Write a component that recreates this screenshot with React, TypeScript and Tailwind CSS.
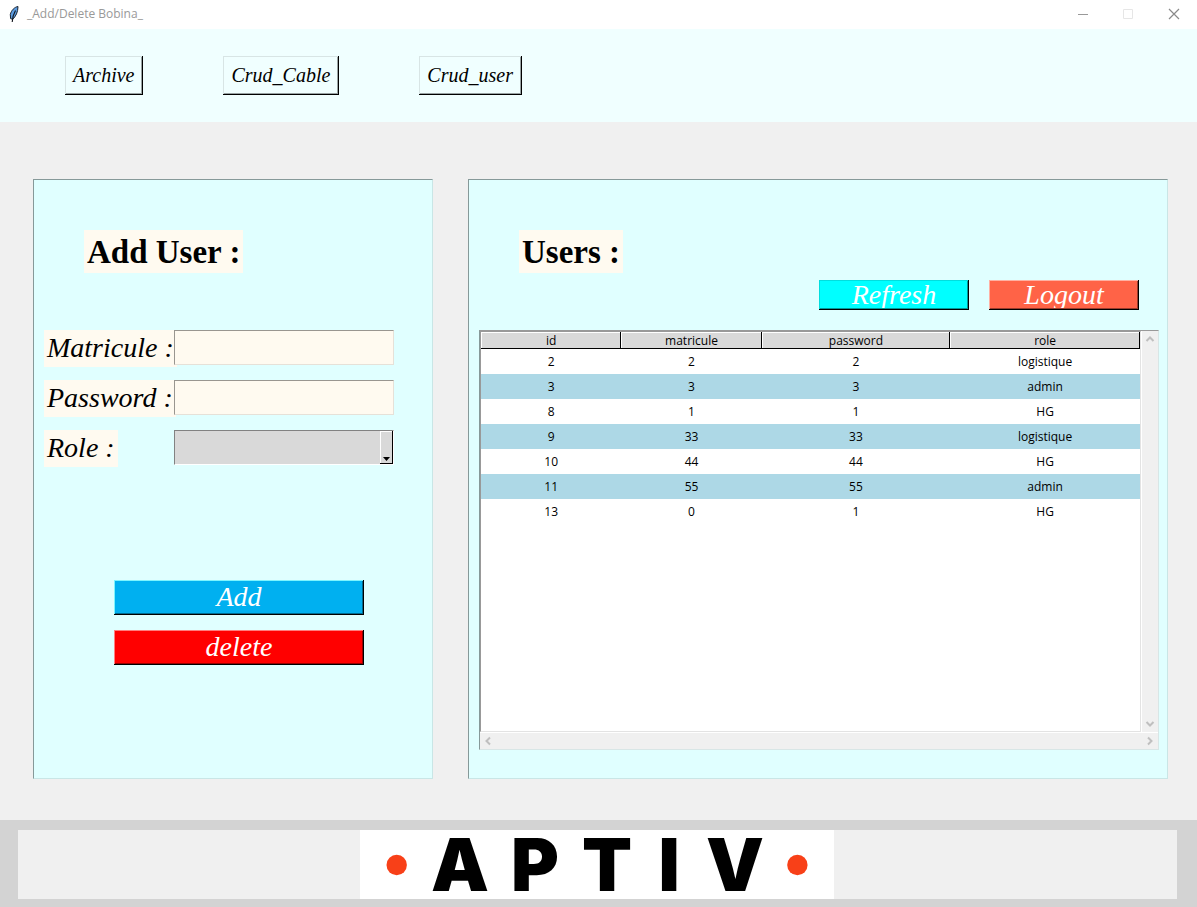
import React from "react";

type User = { id: number; matricule: string; password: string; role: string };

const users: User[] = [
  { id: 2, matricule: "2", password: "2", role: "logistique" },
  { id: 3, matricule: "3", password: "3", role: "admin" },
  { id: 8, matricule: "1", password: "1", role: "HG" },
  { id: 9, matricule: "33", password: "33", role: "logistique" },
  { id: 10, matricule: "44", password: "44", role: "HG" },
  { id: 11, matricule: "55", password: "55", role: "admin" },
  { id: 13, matricule: "0", password: "1", role: "HG" },
];

const sans = "font-['Open_Sans','Noto_Sans',sans-serif]";
const serif = "font-['Liberation_Serif',serif]";

function TitleBar() {
  return (
    <header className={`flex h-[29px] items-center bg-white pb-0.5 text-[#999999] ${sans}`}>
      <svg className="ml-2 h-[18px] w-3" viewBox="0 0 12 18" aria-hidden="true">
        <path d="M10 1.500C6.500 2 3.200 5.500 2.300 9.500L2.600 13.600L4.600 14.300C7.800 11.500 10 7 10 1.500Z" fill="#5b9be0" stroke="#1b2430" strokeWidth="1" />
        <path d="M7.500 5.500C6 8 4.700 11 4.200 17" fill="none" stroke="#10151c" strokeWidth="1.100" />
      </svg>
      <h1 className="ml-[7px] flex-1 text-xs">_Add/Delete Bobina_</h1>
      <button type="button" aria-label="Minimize" className="flex h-full w-[45px] items-center justify-center">
        <svg className="h-3 w-3" viewBox="0 0 12 12"><path d="M0 6.500H10" stroke="#999" /></svg>
      </button>
      <button type="button" aria-label="Maximize" disabled className="flex h-full w-[45px] items-center justify-center">
        <svg className="h-3 w-3" viewBox="0 0 12 12"><path d="M0.500 1.500H9.500V10.500H0.500Z" fill="none" stroke="#e6e6e6" /></svg>
      </button>
      <button type="button" aria-label="Close" className="flex h-full w-[46px] items-center justify-center">
        <svg className="h-3 w-3" viewBox="0 0 12 12"><path d="M1 1L11 11M11 1L1 11" stroke="#8a8a8a" strokeWidth="1.200" /></svg>
      </button>
    </header>
  );
}

function NavButton({ children }: { children: React.ReactNode }) {
  return (
    <button
      type="button"
      className="h-[39px] pr-[9px] pb-0.5 pl-2 text-xl italic shadow-[inset_-1px_-1px_0_#000,inset_1px_1px_0_#d8e5e5,inset_-2px_-2px_0_#98a2a2]"
    >
      {children}
    </button>
  );
}

function ActionButton({ className, textClass, children }: { className: string; textClass: string; children: React.ReactNode }) {
  return (
    <button type="button" className={`block p-0.5 text-[28px] text-white italic ${className}`}>
      <span className={`block overflow-hidden ${textClass}`}>{children}</span>
    </button>
  );
}

function PanelTitle({ children }: { children: React.ReactNode }) {
  return (
    <h2 className="mt-[50px] ml-[50px] w-max bg-[#fffaf0] px-[3px] pt-0.5 text-[33px] leading-[41px] font-bold">{children}</h2>
  );
}

function FieldRow({ id, label, children }: { id: string; label: string; children: React.ReactNode }) {
  return (
    <div className="flex h-[37px] items-start">
      <div className="w-[130px] shrink-0">
        <label htmlFor={id} className="block w-max bg-[#fffaf0] px-[3px] pb-0.5 text-[28px] leading-[35px] italic">
          {label}
        </label>
      </div>
      {children}
    </div>
  );
}

const inputClass =
  "relative h-[35px] w-[220px] border border-t-[#999690] border-l-[#999690] border-r-[#e6e1d8] border-b-[#e6e1d8] bg-[#fffaf0] px-1 text-xl outline-none";

function AddUserPanel() {
  return (
    <section className="w-[400px] shrink-0 border border-t-[#869999] border-l-[#869999] border-r-[#c9e6e6] border-b-[#c9e6e6] bg-[#e0ffff]">
      <PanelTitle>Add User :</PanelTitle>
      <form className="mt-[57px] ml-2.5" onSubmit={(e) => e.preventDefault()}>
        <div className="flex flex-col gap-[13px]">
          <FieldRow id="matricule" label="Matricule :">
            <input id="matricule" className={inputClass} />
          </FieldRow>
          <FieldRow id="password" label="Password :">
            <input id="password" className={inputClass} />
          </FieldRow>
          <FieldRow id="role" label="Role :">
            <div className="relative h-[35px] w-[220px]">
              <select
                id="role"
                defaultValue=""
                className="h-full w-full appearance-none border border-t-[#828282] border-l-[#828282] border-r-white border-b-white bg-[#d9d9d9] pr-4 pl-1 text-xl outline-none"
              >
                <option value=""></option>
                <option>admin</option>
                <option>logistique</option>
                <option>HG</option>
              </select>
              <span className="pointer-events-none absolute top-px right-px bottom-px flex w-[13px] items-end justify-center bg-[#d9d9d9] pb-[3px] shadow-[inset_-1px_-1px_0_#000,inset_1px_1px_0_#fff]">
                <svg className="h-1 w-[7px]" viewBox="0 0 7 4"><path d="M0 0H7L3.500 4Z" /></svg>
              </span>
            </div>
          </FieldRow>
        </div>
        <div className="mt-[113px] ml-[70px] flex flex-col gap-[15px]">
          <ActionButton
            className="w-[250px] bg-[#00b0f0] shadow-[inset_-1px_-1px_0_#000,inset_1px_1px_0_#7df4ff,inset_-2px_-2px_0_#006a90]"
            textClass="h-[31px] leading-[29px]"
          >
            Add
          </ActionButton>
          <ActionButton
            className="w-[250px] bg-[#ff0000] shadow-[inset_-1px_-1px_0_#000,inset_1px_1px_0_#ff7f7f,inset_-2px_-2px_0_#990000]"
            textClass="h-[31px] leading-[29px]"
          >
            delete
          </ActionButton>
        </div>
      </form>
    </section>
  );
}

function Arrow({ d, label }: { d: string; label: string }) {
  return (
    <button type="button" aria-label={label} className="flex h-4 w-4 items-center justify-center">
      <svg className="h-2.5 w-2.5" viewBox="0 0 10 10"><path d={d} fill="none" stroke="#bfbfbf" strokeWidth="2" /></svg>
    </button>
  );
}

const headCell =
  "bg-[#d9d9d9] p-0 font-normal leading-[17px] shadow-[inset_-1px_-1px_0_#000,inset_1px_1px_0_#fff]";

function UsersTable() {
  return (
    <div className="mt-5 mr-2 ml-2.5 border border-t-[#999999] border-l-[#869999] border-r-[#d8e6e6] border-b-[#d8e6e6] bg-[#f0f0f0]">
      <div className="flex">
        <div className="h-[401px] flex-1 border border-t-[#999999] border-l-[#999999] border-r-[#e3e3e3] border-b-[#e3e3e3] bg-white">
          <table className={`w-full table-fixed text-center text-xs ${sans}`}>
            <colgroup>
              <col className="w-[21.3%]" />
              <col className="w-[21.3%]" />
              <col className="w-[28.6%]" />
              <col className="w-[28.8%]" />
            </colgroup>
            <thead>
              <tr className="h-[17px]">
                <th className={headCell}>id</th>
                <th className={headCell}>matricule</th>
                <th className={headCell}>password</th>
                <th className={headCell}>role</th>
              </tr>
            </thead>
            <tbody>
              {users.map((u) => (
                <tr key={u.id} className="h-[25px] even:bg-[#add8e6]">
                  <td className="p-0">{u.id}</td>
                  <td className="p-0">{u.matricule}</td>
                  <td className="p-0">{u.password}</td>
                  <td className="p-0">{u.role}</td>
                </tr>
              ))}
            </tbody>
          </table>
        </div>
        <div className="flex w-[17px] flex-col items-end justify-between border-l border-white">
          <Arrow label="Scroll up" d="M1.500 7L5 3.500L8.500 7" />
          <Arrow label="Scroll down" d="M1.500 3L5 6.500L8.500 3" />
        </div>
      </div>
      <div className="flex h-[17px] justify-between border-t border-white">
        <Arrow label="Scroll left" d="M7 1.500L3.500 5L7 8.500" />
        <Arrow label="Scroll right" d="M3 1.500L6.500 5L3 8.500" />
      </div>
    </div>
  );
}

function UsersPanel() {
  return (
    <section className="flex-1 border border-t-[#869999] border-l-[#869999] border-r-[#c9e6e6] border-b-[#c9e6e6] bg-[#e0ffff] pb-7">
      <PanelTitle>Users :</PanelTitle>
      <div className="mt-[7px] mr-7 flex justify-end gap-5">
        <ActionButton
          className="w-[150px] bg-[#00ffff] shadow-[inset_-1px_-1px_0_#000,inset_1px_1px_0_#00dede,inset_-2px_-2px_0_#009999]"
          textClass="h-[26px] leading-[26px]"
        >
          Refresh
        </ActionButton>
        <ActionButton
          className="w-[150px] bg-[#ff6347] shadow-[inset_-1px_-1px_0_#000,inset_1px_1px_0_#ffb1a3,inset_-2px_-2px_0_#993b2b]"
          textClass="h-[26px] leading-[26px]"
        >
          Logout
        </ActionButton>
      </div>
      <UsersTable />
    </section>
  );
}

function Logo() {
  return (
    <svg
      className="h-[69px] w-[474px] overflow-visible bg-white font-['Inter',sans-serif] text-[73px] font-black"
      viewBox="0 0 474 69"
      role="img"
      aria-label="APTIV"
    >
      <circle cx="36.700" cy="35" r="10.200" fill="#f84018" />
      <g textAnchor="middle">
        <text x="100" y="61">A</text>
        <text x="175" y="61">P</text>
        <text x="247" y="61">T</text>
        <text x="309" y="61">I</text>
        <text x="375" y="61">V</text>
      </g>
      <circle cx="437.400" cy="35" r="10.200" fill="#f84018" />
    </svg>
  );
}

export default function App() {
  return (
    <div className={`flex min-h-screen flex-col bg-[#f0f0f0] text-black ${serif}`}>
      <TitleBar />
      <nav className="flex h-[93px] items-start gap-20 bg-[#f0ffff] pt-[27px] pl-[65px]">
        <NavButton>Archive</NavButton>
        <NavButton>Crud_Cable</NavButton>
        <NavButton>Crud_user</NavButton>
      </nav>
      <main className="flex flex-1 items-start gap-[35px] pt-[57px] pr-[29px] pb-[41px] pl-[33px] *:min-h-[600px]">
        <AddUserPanel />
        <UsersPanel />
      </main>
      <footer className="bg-[#d3d3d3] pt-2.5 pr-5 pb-2 pl-[18px]">
        <div className="flex justify-center bg-[#f0f0f0] pr-0.5">
          <Logo />
        </div>
      </footer>
    </div>
  );
}
